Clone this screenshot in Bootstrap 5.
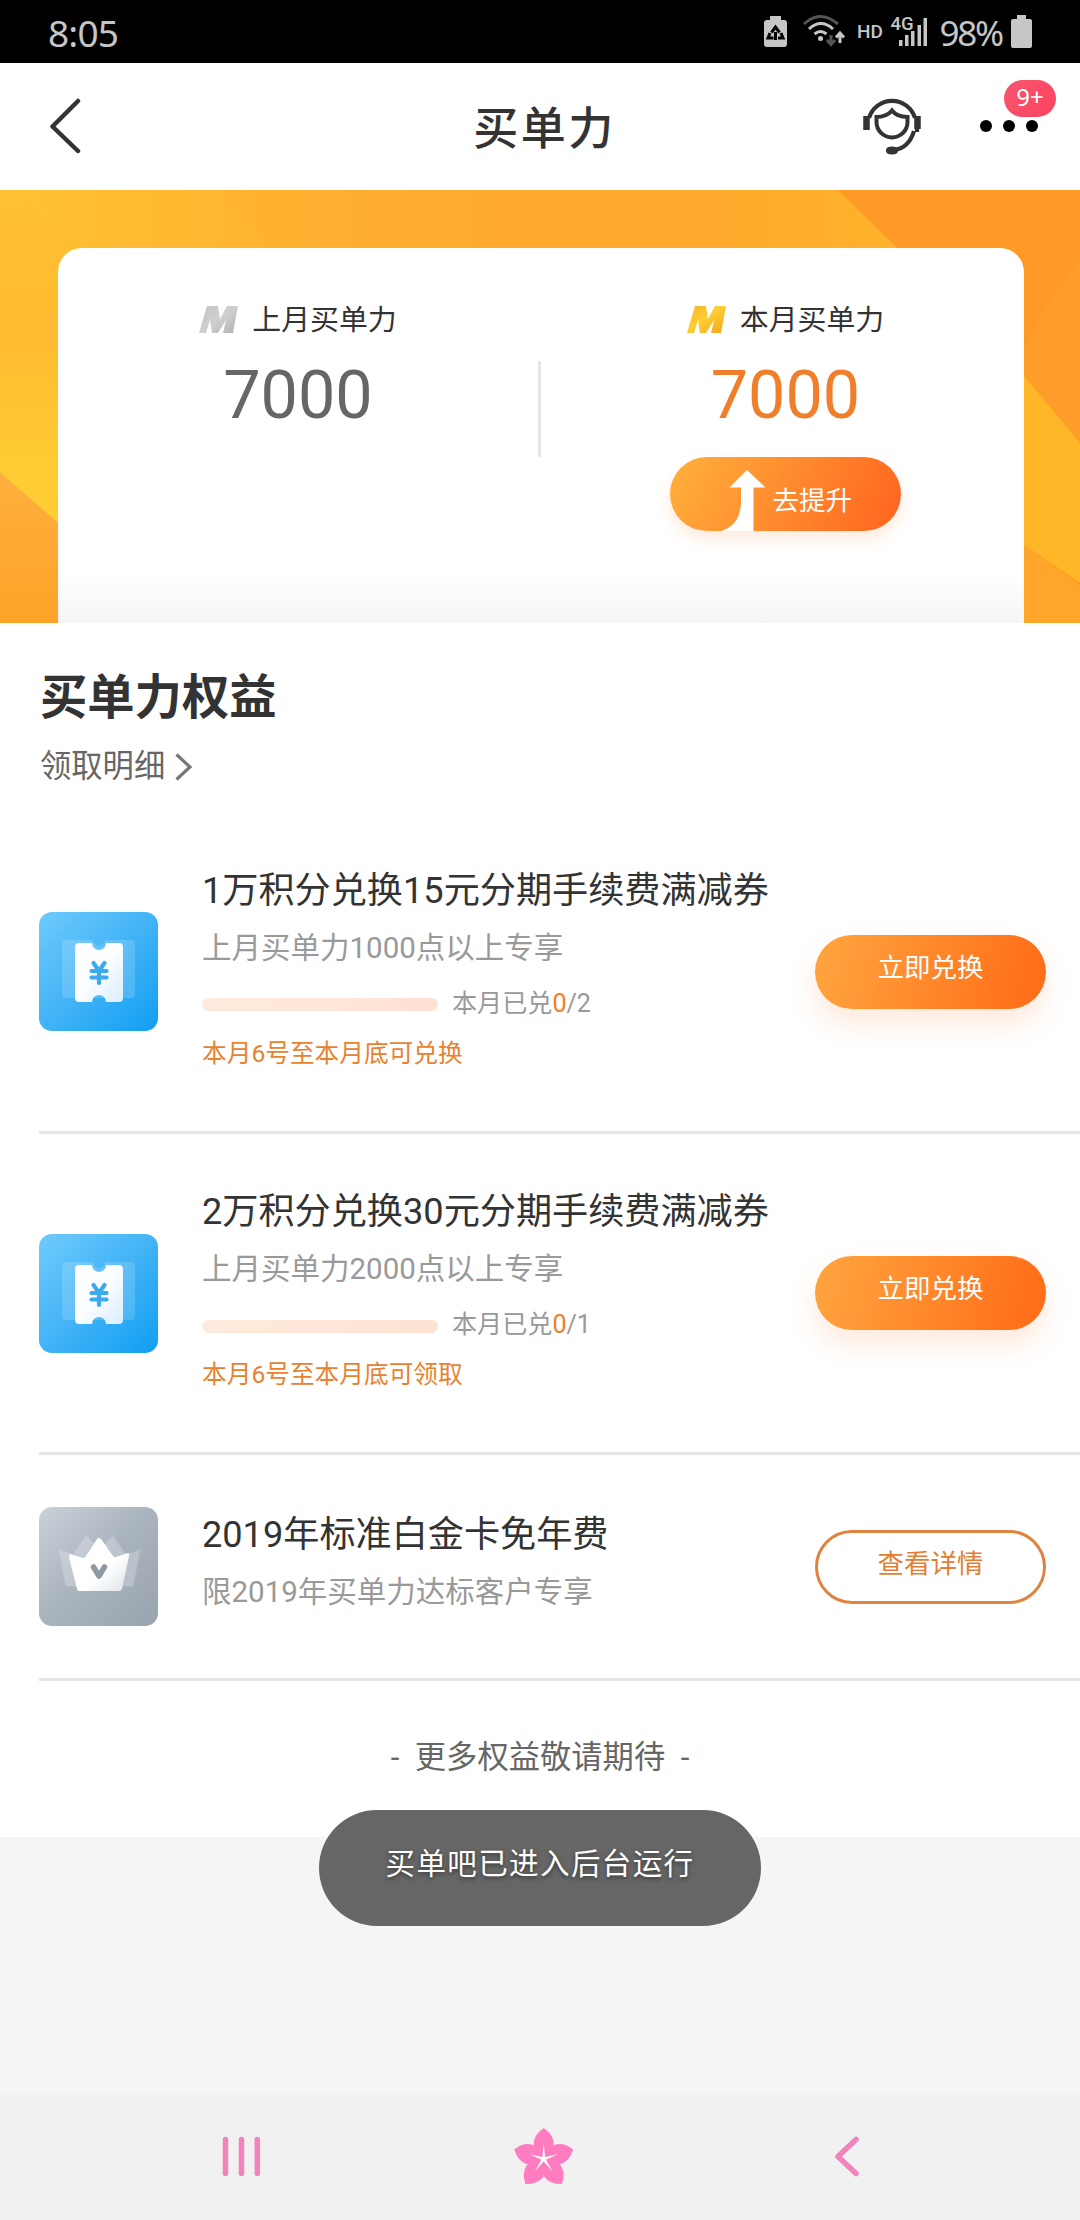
<!DOCTYPE html>
<html lang="zh-CN">
<head>
<meta charset="utf-8">
<meta name="viewport" content="width=device-width, initial-scale=1">
<title>买单力</title>
<link href="https://cdn.jsdelivr.net/npm/bootstrap@5.3.0/dist/css/bootstrap.min.css" rel="stylesheet">
<style>
  body { width: 1080px; height: 2220px; overflow: hidden; background: #f4f5f7; color: #333; font-family: Roboto, "Noto Sans CJK SC", sans-serif; }
  svg { display: block; flex: none; }
  .statusbar { height: 63px; background: #000; color: #c6c6c6; padding: 0 48px; font-family: "Noto Sans", sans-serif; }
  .clock { font-size: 37px; line-height: 64px; letter-spacing: -.8px; padding-top: 3px; }
  .power { font-size: 35px; line-height: 64px; letter-spacing: -2.2px; padding: 3px 9px 0 2px; }
  .topbar { height: 127px; background: #fff; padding: 0 41px 0 50px; }
  .topbar-title { font: 500 45px/60px "Noto Sans CJK SC", sans-serif; letter-spacing: 2.5px; padding-bottom: 2px; }
  .side { width: 200px; }
  .dots { margin-left: 57px; }
  .headset { margin-bottom: 4px; }
  .count-badge { top: -40px; right: -17px; width: 52px; height: 37px; background: linear-gradient(135deg, #f9566f, #fb4360); color: #fff; font: 400 24px/34px "Noto Sans", sans-serif; text-align: center; border-radius: 19px; }
  .banner { height: 433px; grid-template-columns: 1080px; grid-template-rows: 433px; }
  .banner > * { grid-area: 1 / 1; }
  .power-card { margin: 58px 56px 0 58px; background: linear-gradient(#fff 0, #fff 325px, #f6f5f4 375px); border-radius: 24px 24px 0 0; padding-top: 52px; }
  .label-line { font-size: 28.9px; line-height: 40px; gap: 13px; color: #333; }
  .figure { font-size: 66.5px; line-height: 80px; color: #666; margin-top: 15px; }
  .orange { color: #f07e2a; }
  .half-l { width: 480px; }
  .half-r { padding-left: 6px; }
  .rule-v { width: 3px; height: 96px; margin-top: 61px; background: #e6e6e6; }
  .pill { width: 231px; height: 74px; border: 0; border-radius: 37px; padding: 0 0 8px; font-size: 26.5px; line-height: 66px; color: #fff; background: linear-gradient(105deg, #ffa13c 8%, #ff6f1a 92%); box-shadow: 0 14px 28px rgba(255,125,40,.17); }
  .pill:hover { color: #fff; }
  .pill-line { border: 3px solid #df8440; background: #fff; color: #e27f35; line-height: 62px; padding-bottom: 6px; box-shadow: none; }
  .pill-up { margin-top: 22px; background: linear-gradient(115deg, #ffad3b 5%, #ff6721 95%); padding: 0 49px 0 51px; box-shadow: 0 8px 16px rgba(255,125,40,.16); }
  .pill-up span { padding-top: 11px; line-height: 66px; }
  .benefits { height: 1214px; }
  .sect-head { height: 189px; padding: 45px 40px 0; }
  .sect-title { font-size: 47.3px; line-height: 60px; font-weight: 700; margin: 0; }
  .detail { font-size: 31.3px; line-height: 40px; margin-top: 19px; color: #666; gap: 10px; }
  .benefit { height: 322px; margin-left: 39px; padding-right: 34px; border-bottom: 3px solid #e5e5e5; }
  .benefit + .benefit { height: 321px; }
  .benefit.short { height: 226px; }
  .b-body { margin-left: 44px; padding-bottom: 5px; white-space: nowrap; }
  .b-title { font-size: 36.15px; line-height: 57px; color: #333; }
  .b-sub { font-size: 29.5px; line-height: 58px; color: #999; }
  .b-prog { height: 54px; font-size: 25.1px; line-height: 54px; color: #999; gap: 14px; }
  .track { width: 236px; height: 13px; border-radius: 7px; background: linear-gradient(90deg, #feebdd, #fee2d4); margin-top: 2px; }
  .b-note { font-size: 24.7px; line-height: 46px; color: #e8822f; }
  .short .b-body { padding-bottom: 7px; }
  .more { font-size: 31.3px; line-height: 44px; color: #666; padding-top: 55px; }
  .toast-pill { left: 319px; top: 1810px; width: 442px; height: 116px; border-radius: 58px; background: #666; color: #fff; font: 400 29.5px/103px "Noto Sans CJK SC", sans-serif; letter-spacing: 1.4px; text-align: center; text-shadow: 0 2px 4px rgba(0,0,0,.5); }
  .sysnav { height: 126px; background: #f1f1f1; }
</style>
</head>
<body class="d-flex flex-column position-relative">

<div class="statusbar d-flex justify-content-between align-items-center">
  <div class="clock">8:05</div>
  <div class="d-flex align-items-center">
    <svg width="176" height="63" viewBox="764 0 176 63" fill="#c6c6c6">
      <path d="M773 16h11v4h3q3 0 3 3v21q0 3-3 3h-17q-3 0-3-3V23q0-3 3-3h3z"/>
      <g fill="none" stroke="#000" stroke-width="3"><path d="M774.500 32.500l4-5.500 4 5.500M784 33l2 5h-5M773 33l-2 5h5.500M778.500 40v-8"/></g>
      <g fill="none" stroke-width="3" stroke="#c6c6c6">
        <path stroke="#555" d="M807 24q16-15 34 0"/>
        <path d="M812 29q12-11 24 0M817.500 34q6-5 12 0"/>
        <path stroke="#555" d="M834 35v9M830 40l4 4.500 4-4.500"/>
        <path d="M843 43v-9M839 37.500l4-4.500 4 4.500"/>
      </g>
      <circle cx="823.500" cy="38.500" r="2.500"/>
      <text x="860" y="38" font-family="Roboto" font-weight="500" font-size="19">HD</text>
      <text x="893.500" y="29.500" font-family="Roboto" font-weight="500" font-size="18.500">4G</text>
      <path d="M902 40h3.500v6H902zM908 35h3.500v11H908zM914 31h3.500v15H914zM920.500 25h3.500v21h-3.500zM926.500 18h3.500v28h-3.500z"/>
    </svg>
    <div class="power">98%</div>
    <svg width="21" height="63" viewBox="0 0 21 63" fill="#c6c6c6"><path d="M6 15h9v4h4q2 0 2 2v25q0 2-2 2H2q-2 0-2-2V21q0-2 2-2h4z"/></svg>
  </div>
</div>

<div class="topbar d-flex justify-content-between align-items-center">
  <div class="side">
    <svg width="34" height="60" viewBox="0 0 34 60" fill="none" stroke="#333" stroke-width="4.500" stroke-linecap="round" stroke-linejoin="round"><path d="M28 4L2.500 29.500 28 54"/></svg>
  </div>
  <div class="topbar-title">买单力</div>
  <div class="side d-flex justify-content-end align-items-center">
    <svg class="headset" width="60" height="60" viewBox="862 96 60 60" fill="none" stroke="#333" stroke-width="4.200">
      <path d="M869 119a24 24 0 0 1 46 0M917 119v14M914 132q-5 17-20 19"/>
      <path d="M866.500 117v14M917.500 117v13" stroke-width="6.500"/>
      <path d="M876.500 118q10 0 15.500-6.500 5 6.500 15.500 6.500v5a15.500 15.500 0 0 1-31 0z" stroke-width="4"/>
      <ellipse cx="892" cy="151.500" rx="4" ry="1.800" />
    </svg>
    <div class="dots position-relative">
      <svg width="60" height="14" viewBox="0 1 60 14"><circle cx="7" cy="7" r="6"/><circle cx="30" cy="7" r="6"/><circle cx="53" cy="7" r="6"/></svg>
      <span class="count-badge position-absolute">9+</span>
    </div>
  </div>
</div>

<div class="banner d-grid">
  <svg width="1080" height="433" viewBox="0 0 1080 433">
    <defs>
      <linearGradient id="bg" x1="0" x2="1"><stop offset="0" stop-color="#ffbb33"/><stop offset=".5" stop-color="#ffa92e"/><stop offset="1" stop-color="#ffa92e"/></linearGradient>
      <linearGradient id="lf" x1="0" y1="0" x2="0" y2="1"><stop offset="0" stop-color="#ffc033"/><stop offset=".35" stop-color="#ffbb31"/><stop offset=".65" stop-color="#ffcd33"/><stop offset="1" stop-color="#ffd033"/></linearGradient>
      <linearGradient id="lo" x1="0" y1="0" x2="0" y2="1"><stop offset="0" stop-color="#ffb03e"/><stop offset="1" stop-color="#fda327"/></linearGradient>
      <linearGradient id="ro" x1="0" y1="0" x2="0" y2="1"><stop offset="0" stop-color="#ff9a26"/><stop offset="1" stop-color="#ff9826"/></linearGradient>
      <linearGradient id="tp" x1="0" x2="1"><stop offset="0" stop-color="#ffc233"/><stop offset="1" stop-color="#ffb32f"/></linearGradient>
      <linearGradient id="mid" x1="0" x2="1"><stop offset="0" stop-color="#ffaa2d"/><stop offset="1" stop-color="#ffb32b"/></linearGradient>
    </defs>
    <rect width="1080" height="433" fill="url(#bg)"/>
    <path d="M0 0h225l43 58v20H58v355H0z" fill="url(#tp)"/>
    <path d="M0 0h15l60 58v375H0z" fill="url(#lf)"/>
    <path d="M715 0h123l65 65H738z" fill="url(#mid)"/>
    <path d="M838 0h242v433h-60V120L897 57z" fill="url(#ro)"/>
    <path d="M1080 70q-40 50-56 90v30l56 63z" fill="#ff9d2a"/>
    <path d="M1024 186l56 67v140l-56-38z" fill="#ffb727"/>
    <path d="M1024 355l56 40v38h-56z" fill="#ffa62a"/>
    <path d="M0 282l58 51v100H0z" fill="url(#lo)"/>
  </svg>
  <div class="power-card d-flex">
    <div class="half-l d-flex flex-column align-items-center">
      <div class="label-line d-flex align-items-center">
        <svg width="40" height="28" viewBox="0 0 40 28"><defs><linearGradient id="ms" x1="0" y1="0" x2="1" y2="1"><stop offset="0" stop-color="#c4c4c4"/><stop offset=".5" stop-color="#cfcfcf"/><stop offset="1" stop-color="#b2b2b2"/></linearGradient></defs><path d="M8 0h11l2 13L28 0h11l-5 27H24l3-13-8 13h-6l-2-13-4 13H0z" fill="url(#ms)"/></svg>
        <span>上月买单力</span>
      </div>
      <div class="figure">7000</div>
    </div>
    <div class="rule-v"></div>
    <div class="half-r flex-fill d-flex flex-column align-items-center">
      <div class="label-line d-flex align-items-center">
        <svg width="40" height="28" viewBox="0 0 40 28"><defs><linearGradient id="mg" x1="0" y1="0" x2="1" y2="1"><stop offset="0" stop-color="#f6b22a"/><stop offset=".45" stop-color="#fdce34"/><stop offset="1" stop-color="#f5a318"/></linearGradient></defs><path d="M8 0h11l2 13L28 0h11l-5 27H24l3-13-8 13h-6l-2-13-4 13H0z" fill="url(#mg)"/></svg>
        <span>本月买单力</span>
      </div>
      <div class="figure orange">7000</div>
      <button class="btn pill pill-up d-flex justify-content-between">
        <svg width="46" height="74" viewBox="0 0 46 74" fill="#fff"><path d="M26 13l18.500 17.500H32.500V74H0q20-6 20-30V30.500H8.500z"/></svg>
        <span>去提升</span>
      </button>
    </div>
  </div>
</div>

<div class="benefits bg-white">
  <div class="sect-head">
    <h2 class="sect-title">买单力权益</h2>
    <div class="detail d-flex align-items-center">领取明细
      <svg width="18" height="28" viewBox="0 0 18 28" fill="none" stroke="#777" stroke-width="3.200"><path d="M1.500 1.500L15 14 1.500 26.500"/></svg>
    </div>
  </div>

  <div class="benefit d-flex align-items-center">
    <svg width="119" height="119" viewBox="0 0 119 119">
      <defs>
        <linearGradient id="blue" x1="0" y1="0" x2="1" y2="1"><stop offset="0" stop-color="#6fcbfc"/><stop offset=".5" stop-color="#42b3f6"/><stop offset="1" stop-color="#109ff3"/></linearGradient>
        <linearGradient id="tick" x1="0" y1="0" x2="1" y2="1"><stop offset="0" stop-color="#fff"/><stop offset=".5" stop-color="#fbfdff"/><stop offset="1" stop-color="#d9edfd"/></linearGradient>
      </defs>
      <g id="coupon">
        <rect width="119" height="119" rx="13" fill="url(#blue)"/>
        <path d="M27 28h27a6 6 0 0 0 12 0h26q4 0 4 4v50q0 4-4 4H27q-4 0-4-4V32q0-4 4-4z" fill="#fff" opacity=".16"/>
        <path d="M40 31h13a7 7 0 0 0 14 0h13q4 0 4 4v51q0 4-4 4H67a7 7 0 0 0-14 0H40q-4 0-4-4V35q0-4 4-4z" fill="url(#tick)"/>
        <path d="M54.500 51l5.500 8 5.500-8M60 59v12M52.500 59h15M52.500 65.500h15" fill="none" stroke="#3cabed" stroke-width="4.200" stroke-linecap="round"/>
      </g>
    </svg>
    <div class="b-body">
      <div class="b-title">1万积分兑换15元分期手续费满减券</div>
      <div class="b-sub">上月买单力1000点以上专享</div>
      <div class="b-prog d-flex align-items-center"><div class="track"></div><span>本月已兑<span class="orange">0</span>/2</span></div>
      <div class="b-note">本月6号至本月底可兑换</div>
    </div>
    <button class="btn pill ms-auto">立即兑换</button>
  </div>

  <div class="benefit d-flex align-items-center">
    <svg width="119" height="119" viewBox="0 0 119 119"><use href="#coupon"/></svg>
    <div class="b-body">
      <div class="b-title">2万积分兑换30元分期手续费满减券</div>
      <div class="b-sub">上月买单力2000点以上专享</div>
      <div class="b-prog d-flex align-items-center"><div class="track"></div><span>本月已兑<span class="orange">0</span>/1</span></div>
      <div class="b-note">本月6号至本月底可领取</div>
    </div>
    <button class="btn pill ms-auto">立即兑换</button>
  </div>

  <div class="benefit short d-flex align-items-center">
    <svg width="119" height="119" viewBox="0 0 119 119">
      <defs>
        <linearGradient id="gray" x1="0" y1="0" x2="1" y2="1"><stop offset="0" stop-color="#cbd1d9"/><stop offset=".5" stop-color="#a9b3bd"/><stop offset="1" stop-color="#98a4ae"/></linearGradient>
        <linearGradient id="crown" x1="0" y1="0" x2="1" y2="1"><stop offset="0" stop-color="#fff"/><stop offset=".6" stop-color="#fff"/><stop offset="1" stop-color="#dde1e5"/></linearGradient>
      </defs>
      <rect width="119" height="119" rx="13" fill="url(#gray)"/>
      <path d="M20 43l14 5 13-19 12 12-12 38H27zM101 43l-14 5-13-19-12 12 12 38h20z" fill="#fff" opacity=".24" stroke="#fff" stroke-opacity=".3" stroke-linejoin="round" stroke-width="2"/>
      <path d="M31 47l13 4q2 0 3-2l11-17q2-2 4 0l12 17q1 2 3 1l12-4q2 0 1 3l-7 33q-1 2-3 2H40q-2 0-2-2l-8-32q0-3 1-3z" fill="url(#crown)"/>
      <path d="M54.500 60l5.500 9 5.500-9" fill="none" stroke="#8d99a3" stroke-width="5.500" stroke-linecap="round" stroke-linejoin="round"/>
    </svg>
    <div class="b-body">
      <div class="b-title">2019年标准白金卡免年费</div>
      <div class="b-sub">限2019年买单力达标客户专享</div>
    </div>
    <button class="btn pill pill-line ms-auto">查看详情</button>
  </div>

  <div class="more text-center">-&nbsp; 更多权益敬请期待 &nbsp;-</div>
</div>

<div class="toast-pill position-absolute">买单吧已进入后台运行</div>

<div class="sysnav mt-auto">
  <svg width="1080" height="126" viewBox="0 2094 1080 126" fill="none" stroke="#f184bd" stroke-width="5.500" stroke-linecap="round">
    <path d="M225.500 2139.500v34M241.500 2139.500v34M257.300 2139.500v34"/>
    <path d="M856 2139.500l-18 17 18 17" stroke-linejoin="round"/>
    <g stroke="none" fill="#ff7cc0" transform="translate(543.700 2159)">
      <path id="petal" d="M0-31Q10-24 10-15 9-6 1-1H-1Q-9-6-10-15-10-24 0-31z"/>
      <use href="#petal" transform="rotate(72)"/><use href="#petal" transform="rotate(144)"/><use href="#petal" transform="rotate(216)"/><use href="#petal" transform="rotate(288)"/>
      <path id="ray" d="M0-15L1.600 0h-3.200z" fill="#fff"/>
      <use href="#ray" transform="rotate(72)"/><use href="#ray" transform="rotate(144)"/><use href="#ray" transform="rotate(216)"/><use href="#ray" transform="rotate(288)"/>
    </g>
  </svg>
</div>

<script src="https://cdn.jsdelivr.net/npm/bootstrap@5.3.0/dist/js/bootstrap.bundle.min.js"></script>
</body>
</html>
